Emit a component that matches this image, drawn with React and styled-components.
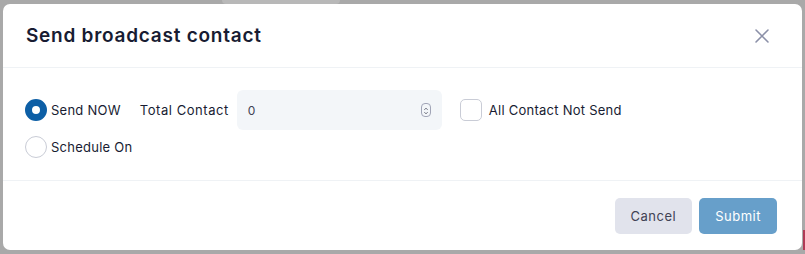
import React, { useState } from 'react';
import styled, { createGlobalStyle } from 'styled-components';

const Global = createGlobalStyle`
  html, body {
    margin: 0;
    padding: 0;
    background: #a9a9a9;
    font-family: Inter, "Noto Sans", sans-serif;
    color: #181c32;
  }
  * { box-sizing: border-box; }
`

const Backdrop = styled.div`
  position: relative;
  width: 805px;
  height: 254px;
  padding: 4px 3px 4px 3px;
  overflow: hidden;
`

const Peek = styled.div`
  position: absolute;
  top: 0;
  left: 222px;
  width: 118px;
  height: 4px;
  background: #b8b8b8;
  border-radius: 0 0 6px 6px;
`

const RedEdge = styled.div`
  position: absolute;
  right: 0;
  top: 230px;
  width: 2px;
  height: 20px;
  background: #b03a55;
`

const Modal = styled.div`
  width: 799px;
  height: 246px;
  background: #fff;
  border-radius: 7px;
  display: flex;
  flex-direction: column;
`

const Header = styled.div`
  display: flex;
  align-items: center;
  justify-content: space-between;
  height: 64px;
  padding: 0 31px 0 23px;
  border-bottom: 1px solid #eff2f5;
`

const Title = styled.h2`
  margin: 0;
  font-size: 19px;
  font-weight: 600;
  letter-spacing: 0.75px;
  color: #181c32;
`

const Close = styled.button`
  border: none;
  background: none;
  padding: 0;
  width: 18px;
  height: 18px;
  display: flex;
  cursor: pointer;
`

const Body = styled.div`
  display: flex;
  flex-direction: column;
  gap: 6px;
  padding: 22px 22px 22px 22px;
  border-bottom: 1px solid #eff2f5;
`

const Row = styled.div`
  display: flex;
  align-items: center;
`

const Option = styled.label`
  display: flex;
  align-items: center;
  gap: 4px;
  font-size: 13px;
  letter-spacing: 0.25px;
  color: #181c32;
  cursor: pointer;
`

const Radio = styled.span`
  width: 22px;
  height: 22px;
  border-radius: 50%;
  border: ${p => p.checked ? '7px solid #0d5fa6' : '1px solid #c9ccd6'};
  background: #fff;
`

const Box = styled.span`
  width: 22px;
  height: 22px;
  border-radius: 5px;
  border: 1px solid #c9ccd6;
  background: #fff;
  margin-right: 3px;
`

const FieldLabel = styled.span`
  font-size: 13px;
  letter-spacing: 0.55px;
  color: #181c32;
  margin: 0 8px 0 19px;
`

const NumberBox = styled.div`
  width: 205px;
  height: 40px;
  background: #f3f6f9;
  border-radius: 6px;
  display: flex;
  align-items: center;
  justify-content: space-between;
  padding: 0 11px 0 11px;
  font-size: 12px;
  color: #3f4254;
  margin-right: 18px;
`

const Spinner = styled.span`
  width: 10px;
  height: 14px;
  border: 1px solid #a1a5b7;
  border-radius: 4px;
  display: flex;
`

const Footer = styled.div`
  flex: 1;
  display: flex;
  justify-content: flex-end;
  align-items: center;
  gap: 7px;
  padding: 0 25px 0 0;
`

const Button = styled.button`
  height: 36px;
  border: none;
  border-radius: 5px;
  font-family: inherit;
  font-size: 13px;
  letter-spacing: 0.5px;
  padding: 0 16px;
  background: ${p => p.primary ? '#679fca' : '#e1e3ec'};
  color: ${p => p.primary ? '#fff' : '#3f4254'};
  cursor: pointer;
`

export default function App() {
  const [mode, setMode] = useState('now');
  return (
    <>
      <Global />
      <Backdrop>
        <Peek />
        <RedEdge />
        <Modal>
          <Header>
            <Title>Send broadcast contact</Title>
            <Close aria-label="close">
              <svg width="18" height="18" viewBox="0 0 18 18">
                <path d="M3 3L15 15M15 3L3 15" stroke="#8b90a8" strokeWidth="1.6" strokeLinecap="round" />
              </svg>
            </Close>
          </Header>
          <Body>
            <Row>
              <Option onClick={() => setMode('now')}>
                <Radio checked={mode === 'now'} />
                Send NOW
              </Option>
              <FieldLabel>Total Contact</FieldLabel>
              <NumberBox>
                0
                <Spinner>
                  <svg width="10" height="14" viewBox="0 0 10 14">
                    <path d="M3 5.5L5 3.5L7 5.5M3 8.5L5 10.5L7 8.5" stroke="#3f4254" strokeWidth="1" fill="none" />
                  </svg>
                </Spinner>
              </NumberBox>
              <Option>
                <Box />
                All Contact Not Send
              </Option>
            </Row>
            <Row>
              <Option onClick={() => setMode('schedule')}>
                <Radio checked={mode === 'schedule'} />
                Schedule On
              </Option>
            </Row>
          </Body>
          <Footer>
            <Button>Cancel</Button>
            <Button primary>Submit</Button>
          </Footer>
        </Modal>
      </Backdrop>
    </>
  );
}
